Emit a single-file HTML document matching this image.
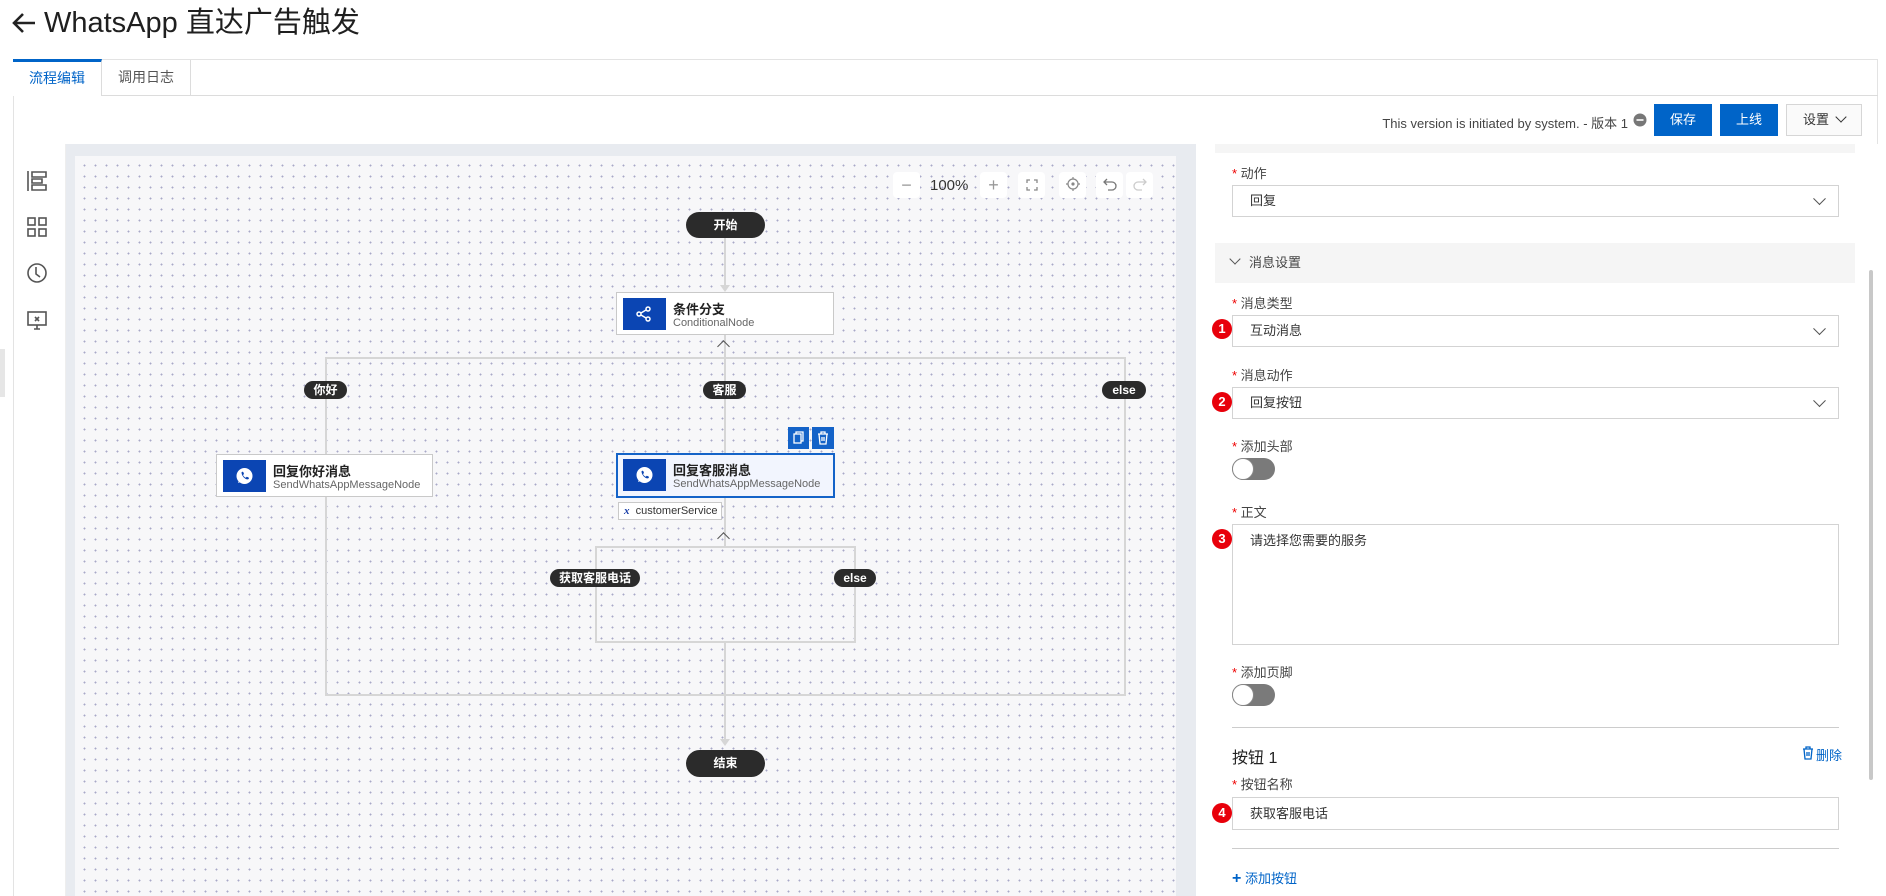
<!DOCTYPE html>
<html><head><meta charset="utf-8"><style>
*{box-sizing:border-box;margin:0;padding:0}
body{width:1886px;height:896px;overflow:hidden;background:#fff;font-family:"Liberation Sans","Noto Sans CJK SC",sans-serif;color:#333;position:relative}
.a{position:absolute}
.pill{position:absolute;background:#2b2b2b;color:#fff;font-size:12px;font-weight:bold;border-radius:14px;text-align:center}
.ln{position:absolute;background:#d6d6d6}
.node{position:absolute;background:#fff;border:1px solid #c9c9c9}
.node .ic{position:absolute;left:6px;top:5px;width:43px;height:32px;background:#0b45b3}
.node .t1{position:absolute;left:56px;top:6px;font-size:13px;font-weight:bold;color:#222}
.node .t2{position:absolute;left:56px;top:24px;font-size:11px;color:#666}
.lbl{position:absolute;font-size:13px;color:#444;left:1232px}
.lbl:before{content:"* ";color:#e00}
.sel{position:absolute;left:1232px;width:607px;border:1px solid #d3d3d3;background:#fff;font-size:13px;color:#333;padding-left:17px}
.chev{position:absolute;right:14px;top:50%;width:9px;height:9px;border-right:1.5px solid #555;border-bottom:1.5px solid #555;transform:translateY(-75%) rotate(45deg)}
.badge{position:absolute;left:1212px;width:20px;height:20px;border-radius:50%;background:#e8000b;color:#fff;font-size:13px;font-weight:bold;text-align:center;line-height:20px}
.tog{position:absolute;left:1232px;width:43px;height:22px;border-radius:11px;background:#7a7a7a}
.tog:after{content:"";position:absolute;left:0;top:0;width:22px;height:22px;border-radius:50%;background:#fff;border:1px solid #888;box-sizing:border-box}
.zb{position:absolute;top:172px;width:27px;height:26px;background:#fff;border-radius:4px;color:#999;text-align:center;line-height:26px;font-size:18px}
</style></head><body>
<!-- title -->
<svg class="a" style="left:11px;top:12px" width="26" height="22" viewBox="0 0 26 22" fill="none" stroke="#222" stroke-width="2.6"><path d="M24 11H3M12 2L3 11l9 9"/></svg>
<div class="a" style="left:44px;top:5px;font-size:29px;color:#1f1f1f;line-height:36px">WhatsApp 直达广告触发</div>
<!-- frame -->
<div class="a" style="left:13px;top:59px;width:1865px;height:837px;border:1px solid #e3e3e3;border-bottom:none"></div>
<div class="a" style="left:13px;top:95px;width:1865px;height:1px;background:#dcdcdc"></div>
<div class="a" style="left:13px;top:59px;width:89px;height:37px;background:#fff;border-top:3px solid #0064c8;border-right:1px solid #dcdcdc;font-size:14px;color:#0064c8;text-align:center;line-height:33px">流程编辑</div>
<div class="a" style="left:102px;top:60px;width:89px;height:35px;border-right:1px solid #dcdcdc;font-size:14px;color:#555;text-align:center;line-height:35px">调用日志</div>
<!-- toolbar -->
<div class="a" style="right:258px;top:113px;font-size:13px;color:#444;white-space:nowrap">This version is initiated by system. - 版本 1</div>
<svg class="a" style="left:1633px;top:113px" width="14" height="14" viewBox="0 0 14 14"><circle cx="7" cy="7" r="6.5" fill="#777"/><rect x="3.5" y="6.2" width="7" height="1.6" fill="#fff"/></svg>
<div class="a" style="left:1654px;top:104px;width:58px;height:32px;background:#0064c8;color:#fff;font-size:13px;text-align:center;line-height:32px">保存</div>
<div class="a" style="left:1720px;top:104px;width:58px;height:32px;background:#0064c8;color:#fff;font-size:13px;text-align:center;line-height:32px">上线</div>
<div class="a" style="left:1786px;top:104px;width:76px;height:32px;border:1px solid #d6d6d6;background:#fafafa;font-size:13px;line-height:30px;padding-left:16px;color:#333">设置 <span style="display:inline-block;width:8px;height:8px;border-right:1.5px solid #333;border-bottom:1.5px solid #333;transform:rotate(45deg);margin:0 0 3px 4px"></span></div>
<!-- gray area -->
<div class="a" style="left:14px;top:144px;width:1864px;height:752px;background:#e8ebf0"></div>
<div class="a" style="left:14px;top:144px;width:52px;height:752px;background:#fff;border-right:1px solid #eee"></div>
<div class="a" style="left:0;top:349px;width:5px;height:48px;background:#e6e6e6"></div>
<!-- sidebar icons -->
<svg class="a" style="left:26px;top:170px" width="22" height="22" viewBox="0 0 22 22" fill="none" stroke="#555" stroke-width="1.6"><path d="M2 1v20M6 2h14v5H6zM6 9h10v4H6zM6 15h14v5H6z"/></svg>
<svg class="a" style="left:26px;top:216px" width="22" height="22" viewBox="0 0 22 22" fill="none" stroke="#555" stroke-width="1.6"><rect x="2" y="2" width="7" height="7"/><rect x="13" y="2" width="7" height="7"/><rect x="2" y="13" width="7" height="7"/><rect x="13" y="13" width="7" height="7"/></svg>
<svg class="a" style="left:26px;top:262px" width="22" height="22" viewBox="0 0 22 22" fill="none" stroke="#555" stroke-width="1.6"><circle cx="11" cy="11" r="9"/><path d="M10 5v7l4 3"/></svg>
<svg class="a" style="left:26px;top:309px" width="22" height="22" viewBox="0 0 22 22" fill="none" stroke="#555" stroke-width="1.6"><rect x="2" y="3" width="18" height="13"/><path d="M8 20h6M11 16v4M9 8l4 4M13 8l-4 4"/></svg>
<!-- canvas -->
<div class="a" style="left:75px;top:156px;width:1101px;height:740px;background-color:#f7f7f9;background-image:radial-gradient(circle,#a8a8c8 0.8px,transparent 1.1px);background-size:11px 11px;background-position:4px 4px"></div>
<div class="zb" style="left:893px">&#8722;</div>
<div class="a" style="left:930px;top:177px;font-size:15px;color:#333">100%</div>
<div class="zb" style="left:980px">+</div>
<div class="zb" style="left:1018px"><svg width="12" height="12" viewBox="0 0 12 12" fill="none" stroke="#888" stroke-width="1.3"><path d="M1 4V1h3M8 1h3v3M11 8v3H8M4 11H1V8"/></svg></div>
<div class="zb" style="left:1059px"><svg width="14" height="14" viewBox="0 0 14 14" fill="none" stroke="#888" stroke-width="1.2"><circle cx="7" cy="7" r="5"/><circle cx="7" cy="7" r="1" fill="#888"/><path d="M7 0v2M7 12v2M0 7h2M12 7h2"/></svg></div>
<div class="zb" style="left:1096px"><svg width="14" height="14" viewBox="0 0 14 14" fill="none" stroke="#777" stroke-width="1.3"><path d="M4 2L1 5l3 3M1 5h8a4 4 0 010 8H5"/></svg></div>
<div class="zb" style="left:1126px"><svg width="14" height="14" viewBox="0 0 14 14" fill="none" stroke="#ccc" stroke-width="1.3"><path d="M10 2l3 3-3 3M13 5H5a4 4 0 000 8h4"/></svg></div>
<!-- lines -->
<div class="ln" style="left:724px;top:238px;width:2px;height:50px"></div>
<div class="a" style="left:720px;top:285px;width:0;height:0;border-left:5px solid transparent;border-right:5px solid transparent;border-top:7px solid #d6d6d6"></div>
<div class="a" style="left:325px;top:357px;width:801px;height:339px;border:2px solid #d6d6d6"></div>
<div class="ln" style="left:724px;top:334px;width:2px;height:119px"></div>
<div class="ln" style="left:724px;top:497px;width:2px;height:49px"></div>
<div class="a" style="left:595px;top:546px;width:261px;height:97px;border:2px solid #d6d6d6"></div>
<div class="ln" style="left:724px;top:643px;width:2px;height:98px"></div>
<div class="a" style="left:720px;top:739px;width:0;height:0;border-left:5px solid transparent;border-right:5px solid transparent;border-top:7px solid #d6d6d6"></div>
<div class="a" style="left:719px;top:342px;width:9px;height:9px;border-left:1.5px solid #555;border-top:1.5px solid #555;transform:rotate(45deg)"></div>
<div class="a" style="left:719px;top:534px;width:9px;height:9px;border-left:1.5px solid #555;border-top:1.5px solid #555;transform:rotate(45deg)"></div>
<!-- pills -->
<div class="pill" style="left:686px;top:212px;width:79px;height:26px;line-height:26px">开始</div>
<div class="pill" style="left:686px;top:750px;width:79px;height:27px;line-height:27px">结束</div>
<div class="pill" style="left:304px;top:381px;width:43px;height:18px;line-height:18px">你好</div>
<div class="pill" style="left:703px;top:381px;width:43px;height:18px;line-height:18px">客服</div>
<div class="pill" style="left:1102px;top:381px;width:44px;height:18px;line-height:18px">else</div>
<div class="pill" style="left:550px;top:569px;width:90px;height:18px;line-height:18px">获取客服电话</div>
<div class="pill" style="left:834px;top:569px;width:42px;height:18px;line-height:18px">else</div>
<!-- nodes -->
<div class="node" style="left:616px;top:292px;width:218px;height:43px"><div class="ic"><svg width="43" height="32" viewBox="0 0 43 32" fill="none" stroke="#fff" stroke-width="1.5"><circle cx="16" cy="16" r="2"/><circle cx="25" cy="11" r="2"/><circle cx="25" cy="21" r="2"/><path d="M18 15l5-3M18 17l5 3"/></svg></div><div class="t1">条件分支</div><div class="t2">ConditionalNode</div></div>
<div class="node" style="left:216px;top:454px;width:217px;height:43px"><div class="ic"><svg width="43" height="32" viewBox="0 0 43 32"><circle cx="21.5" cy="16" r="8" fill="#fff"/><path d="M15 23l1.5-4 3 2z" fill="#fff"/><path d="M18.5 12.5c.5-1 1.5-1 2 0l.5 1.5-1 1c.5 1.2 1.5 2.2 2.7 2.7l1-1 1.5.5c1 .5 1 1.5 0 2-2 1-6.5-2.5-6.7-6.7z" fill="#0b45b3"/></svg></div><div class="t1">回复你好消息</div><div class="t2">SendWhatsAppMessageNode</div></div>
<div class="node" style="left:616px;top:453px;width:219px;height:45px;border:2px solid #1463c8;background:#f2f5fe"><div class="ic" style="left:5px;top:4px"><svg width="43" height="32" viewBox="0 0 43 32"><circle cx="21.5" cy="16" r="8" fill="#fff"/><path d="M15 23l1.5-4 3 2z" fill="#fff"/><path d="M18.5 12.5c.5-1 1.5-1 2 0l.5 1.5-1 1c.5 1.2 1.5 2.2 2.7 2.7l1-1 1.5.5c1 .5 1 1.5 0 2-2 1-6.5-2.5-6.7-6.7z" fill="#0b45b3"/></svg></div><div class="t1" style="left:55px;top:5px">回复客服消息</div><div class="t2" style="left:55px;top:23px">SendWhatsAppMessageNode</div></div>
<div class="a" style="left:788px;top:427px;width:21px;height:22px;background:#1463c8"><svg width="21" height="22" viewBox="0 0 21 22" fill="none" stroke="#fff" stroke-width="1.3"><rect x="6" y="7" width="7" height="9"/><path d="M8 7V5h7v9h-2"/></svg></div>
<div class="a" style="left:812px;top:427px;width:22px;height:22px;background:#1463c8"><svg width="22" height="22" viewBox="0 0 22 22" fill="none" stroke="#fff" stroke-width="1.3"><path d="M6 7h10M9 7V5h4v2M7 7l1 10h6l1-10M10 10v4M12 10v4"/></svg></div>
<div class="a" style="left:618px;top:502px;width:104px;height:18px;background:#fff;border:1px solid #c9c9c9;font-size:11px;line-height:16px;padding-left:5px;color:#333"><i style="color:#1a3fa8;font-family:'Liberation Serif',serif;font-weight:bold">x</i>&nbsp; customerService</div>
<!-- right panel -->
<div class="a" style="left:1196px;top:144px;width:682px;height:752px;background:#fff"></div>
<div class="a" style="left:1215px;top:144px;width:640px;height:9px;background:#f5f5f5"></div>
<div class="a" style="left:1869px;top:270px;width:4px;height:510px;background:#c8c8c8;border-radius:2px"></div>
<div class="lbl" style="top:163px">动作</div>
<div class="sel" style="top:185px;height:32px;line-height:30px">回复<span class="chev"></span></div>
<div class="a" style="left:1215px;top:243px;width:640px;height:40px;background:#f5f5f5;font-size:13px;color:#444;line-height:40px;padding-left:16px"><span style="display:inline-block;width:8px;height:8px;border-right:1.4px solid #555;border-bottom:1.4px solid #555;transform:rotate(45deg);margin:0 10px 4px 0"></span>消息设置</div>
<div class="lbl" style="top:293px">消息类型</div>
<div class="sel" style="top:315px;height:32px;line-height:30px">互动消息<span class="chev"></span></div>
<div class="badge" style="top:319px">1</div>
<div class="lbl" style="top:365px">消息动作</div>
<div class="sel" style="top:387px;height:32px;line-height:30px">回复按钮<span class="chev"></span></div>
<div class="badge" style="top:392px">2</div>
<div class="lbl" style="top:436px">添加头部</div>
<div class="tog" style="top:458px"></div>
<div class="lbl" style="top:502px">正文</div>
<div class="sel" style="top:524px;height:121px;padding-top:8px;line-height:16px">请选择您需要的服务</div>
<div class="badge" style="top:529px">3</div>
<div class="lbl" style="top:662px">添加页脚</div>
<div class="tog" style="top:684px"></div>
<div class="a" style="left:1232px;top:727px;width:607px;height:1px;background:#ccc"></div>
<div class="a" style="left:1232px;top:744px;font-size:16px;color:#222">按钮 1</div>
<svg class="a" style="left:1802px;top:746px" width="12" height="14" viewBox="0 0 12 14" fill="none" stroke="#0064c8" stroke-width="1.3"><path d="M1 3h10M4 3V1h4v2M2 3l1 10h6l1-10M5 6v4M7 6v4"/></svg>
<div class="a" style="left:1816px;top:745px;font-size:13px;color:#0064c8">删除</div>
<div class="lbl" style="top:774px">按钮名称</div>
<div class="sel" style="top:797px;height:33px;line-height:31px">获取客服电话</div>
<div class="badge" style="top:803px">4</div>
<div class="a" style="left:1232px;top:848px;width:607px;height:1px;background:#ccc"></div>
<div class="a" style="left:1232px;top:868px;font-size:13px;color:#0064c8"><b style="font-size:16px">+</b> 添加按钮</div>
</body></html>
